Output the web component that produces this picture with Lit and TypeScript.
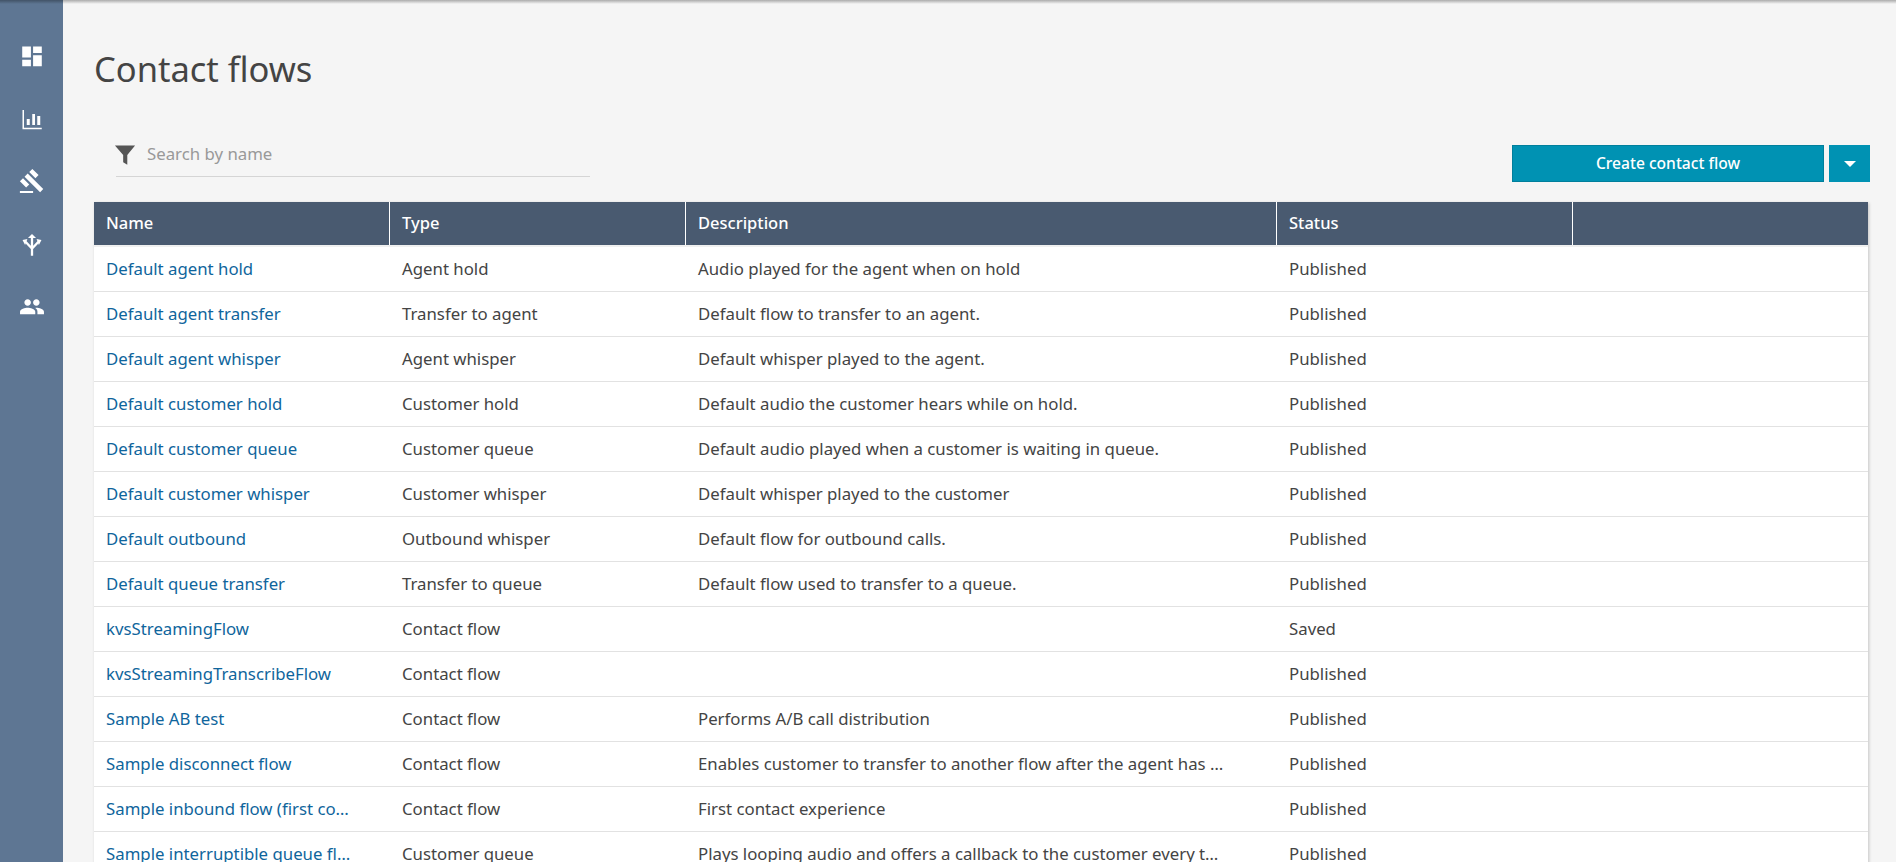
import { LitElement, html, css, svg } from 'lit';
import { customElement } from 'lit/decorators.js';

const rows = [
  ['Default agent hold', 'Agent hold', 'Audio played for the agent when on hold', 'Published'],
  ['Default agent transfer', 'Transfer to agent', 'Default flow to transfer to an agent.', 'Published'],
  ['Default agent whisper', 'Agent whisper', 'Default whisper played to the agent.', 'Published'],
  ['Default customer hold', 'Customer hold', 'Default audio the customer hears while on hold.', 'Published'],
  ['Default customer queue', 'Customer queue', 'Default audio played when a customer is waiting in queue.', 'Published'],
  ['Default customer whisper', 'Customer whisper', 'Default whisper played to the customer', 'Published'],
  ['Default outbound', 'Outbound whisper', 'Default flow for outbound calls.', 'Published'],
  ['Default queue transfer', 'Transfer to queue', 'Default flow used to transfer to a queue.', 'Published'],
  ['kvsStreamingFlow', 'Contact flow', '', 'Saved'],
  ['kvsStreamingTranscribeFlow', 'Contact flow', '', 'Published'],
  ['Sample AB test', 'Contact flow', 'Performs A/B call distribution', 'Published'],
  ['Sample disconnect flow', 'Contact flow', 'Enables customer to transfer to another flow after the agent has …', 'Published'],
  ['Sample inbound flow (first co…', 'Contact flow', 'First contact experience', 'Published'],
  ['Sample interruptible queue fl…', 'Customer queue', 'Plays looping audio and offers a callback to the customer every t…', 'Published'],
];

const navIcons = [
  svg`<g transform="translate(12 11.500) scale(.87) translate(-12 -12)"><path fill="#fff" d="M3 13h8V3H3v10zm0 8h8v-6H3v6zm10 0h8V11h-8v10zm0-18v6h8V3h-8z"/></g>`,
  svg`<path fill="#fff" d="M4.400 4.800h1.200V19h14.200v1.100H4.400z"/><path fill="#fff" d="M7.800 12h2.400v4.800H7.800zM12.200 8h2.200v8.800h-2.200zM16.200 9.600h2.400v7.200h-2.400z"/>`,
  svg`<g transform="translate(12 12) scale(.88) translate(-12 -12)"><path fill="#fff" d="M1 21h12v2H1v-2zM5.245 8.070l2.830-2.827 14.140 14.142-2.828 2.828L5.245 8.070zM12.317 1l5.657 5.656-2.830 2.830-5.654-5.660L12.317 1zM3.825 9.485l5.657 5.657-2.828 2.828-5.657-5.657 2.828-2.828z"/></g>`,
  svg`<g transform="translate(12 13) scale(1.15 1) translate(-12 -13)"><g fill="none" stroke="#fff" stroke-width="1.600"><path d="M12 7.500v14.700M7.500 11l4.500 5.500 4.500-5.500"/></g><path fill="#fff" d="M12 4.800 14.800 8H9.200zM5.400 9.600 8.800 8.800 7.200 13.600zM18.600 9.600 15.200 8.800 16.800 13.600z"/></g>`,
  svg`<g transform="translate(12 13.400) scale(.87) translate(-12 -12)"><path fill="#fff" d="M16 11c1.660 0 2.990-1.340 2.990-3S17.660 5 16 5c-1.660 0-3 1.340-3 3s1.340 3 3 3zm-8 0c1.660 0 2.990-1.340 2.990-3S9.660 5 8 5C6.340 5 5 6.340 5 8s1.340 3 3 3zm0 2c-2.330 0-7 1.170-7 3.500V19h14v-2.500c0-2.330-4.670-3.500-7-3.500zm8 0c-.290 0-.620.020-.970.050 1.160.840 1.970 1.970 1.970 3.450V19h6v-2.500c0-2.330-4.670-3.500-7-3.500z"/></g>`,
];

@customElement('app-root')
export class AppRoot extends LitElement {
  static styles = css`
    :host {
      display: flex;
      position: relative;
      height: 100vh;
      overflow: hidden;
      background: #f5f5f5;
      font-family: 'Noto Sans', sans-serif;
      font-size: 16.8px;
      color: #444;
    }
    .shade {
      position: absolute;
      top: 0;
      left: 0;
      right: 0;
      height: 4px;
      background: linear-gradient(rgba(0, 0, 0, 0.3), rgba(0, 0, 0, 0));
    }
    .nav {
      flex: none;
      width: 63px;
      background: #5e7693;
      display: flex;
      flex-direction: column;
      align-items: center;
      padding-top: 42px;
      box-sizing: border-box;
      gap: 32px;
    }
    .nav svg {
      display: block;
      width: 30px;
      height: 30px;
    }
    .main {
      flex: 1;
      min-width: 0;
      padding: 0 28px 0 31px;
    }
    h1 {
      margin: 49px 0 0;
      font-size: 34.5px;
      line-height: 40px;
      font-weight: 400;
      color: #444;
    }
    .toolbar {
      display: flex;
      justify-content: space-between;
      align-items: flex-start;
      margin-top: 56px;
      height: 37px;
      margin-bottom: 20px;
    }
    .search {
      margin-left: 22px;
      width: 474px;
      height: 42px;
      box-sizing: border-box;
      border-bottom: 1px solid #d5d5d5;
      padding-bottom: 5px;
      display: flex;
      align-items: center;
      gap: 11px;
      margin-top: -10px;
      color: #999;
    }
    .search svg {
      width: 22px;
      height: 22px;
      margin-left: -2px;
      margin-top: 4px;
    }
    .actions {
      display: flex;
      gap: 5px;
      margin-right: -2px;
    }
    .create {
      width: 312px;
      height: 37px;
      box-sizing: border-box;
      background: #0092b3;
      border: 1px solid #007f9c;
      color: #fff;
      font: inherit;
      font-size: 15.6px;
      font-weight: 500;
      padding: 0 0 1px;
    }
    .more {
      width: 41px;
      height: 37px;
      background: #0092b3;
      border: 0;
      padding: 0;
      display: flex;
      align-items: center;
      justify-content: center;
    }
    .caret {
      width: 0;
      height: 0;
      border: 6px solid transparent;
      border-top: 6px solid #fff;
      border-bottom: 0;
    }
    .table {
      box-shadow: 1px 1px 3px rgba(0, 0, 0, 0.2);
      background: #fff;
    }
    .row {
      display: grid;
      grid-template-columns: 296px 296px 591px 296px 1fr;
      height: 45px;
      box-sizing: border-box;
      border-bottom: 1px solid #e2e2e2;
      padding-bottom: 2px;
      align-items: center;
    }
    .head {
      background: #495a70;
      color: #fff;
      font-size: 16.5px;
      font-weight: 500;
      border-bottom: 2px solid #f0f0f0;
      padding-bottom: 0;
      align-items: stretch;
    }
    .head div {
      border-right: 1px solid #fff;
      display: flex;
      align-items: center;
      padding-bottom: 2px;
    }
    .head div:last-child {
      border-right: 0;
    }
    .cell {
      padding: 0 12px;
      white-space: nowrap;
      overflow: hidden;
      text-overflow: ellipsis;
      min-width: 0;
    }
    a {
      color: #0f659c;
      text-decoration: none;
    }
  `;

  render() {
    return html`
      <nav class="nav">
        ${navIcons.map(
          (icon) => html`<svg viewBox="0 0 24 24">${icon}</svg>`
        )}
      </nav>
      <main class="main">
        <h1>Contact flows</h1>
        <div class="toolbar">
          <div class="search">
            <svg viewBox="0 0 24 24">
              <path fill="#555" d="M1 1.500h22l-8.500 10.500v10.500L10 20v-8z" />
            </svg>
            <span>Search by name</span>
          </div>
          <div class="actions">
            <button class="create">Create contact flow</button>
            <button class="more"><span class="caret"></span></button>
          </div>
        </div>
        <div class="table">
          <div class="row head">
            <div class="cell">Name</div>
            <div class="cell">Type</div>
            <div class="cell">Description</div>
            <div class="cell">Status</div>
            <div class="cell"></div>
          </div>
          ${rows.map(
            ([name, type, desc, status]) => html`
              <div class="row">
                <div class="cell"><a href="#">${name}</a></div>
                <div class="cell">${type}</div>
                <div class="cell">${desc}</div>
                <div class="cell">${status}</div>
                <div class="cell"></div>
              </div>
            `
          )}
        </div>
      </main>
      <div class="shade"></div>
    `;
  }
}
